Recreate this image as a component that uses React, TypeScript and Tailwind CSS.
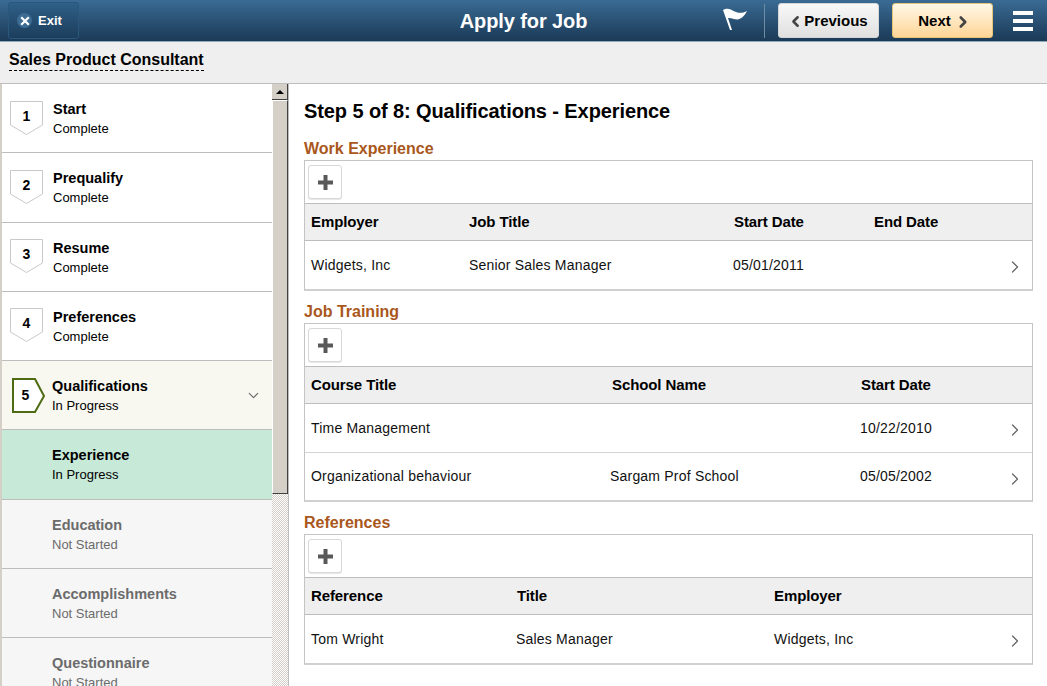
import { ChevronDown, ChevronRight, ChevronLeft } from 'lucide-react';

type Step = { num?: number; title: string; status: string; kind: 'done' | 'current' | 'active' | 'todo' };

const STEPS: Step[] = [
  { num: 1, title: 'Start', status: 'Complete', kind: 'done' },
  { num: 2, title: 'Prequalify', status: 'Complete', kind: 'done' },
  { num: 3, title: 'Resume', status: 'Complete', kind: 'done' },
  { num: 4, title: 'Preferences', status: 'Complete', kind: 'done' },
  { num: 5, title: 'Qualifications', status: 'In Progress', kind: 'current' },
  { title: 'Experience', status: 'In Progress', kind: 'active' },
  { title: 'Education', status: 'Not Started', kind: 'todo' },
  { title: 'Accomplishments', status: 'Not Started', kind: 'todo' },
  { title: 'Questionnaire', status: 'Not Started', kind: 'todo' },
];

function Badge({ num, current }: { num: number; current: boolean }) {
  if (current) {
    return (
      <div className="relative w-[33px] h-[35px] ml-[10px] shrink-0">
        <svg width="34" height="36" viewBox="0 0 34 36" className="absolute left-0 top-0">
          <path d="M1 1H23L32 18L23 34H1Z" fill="#fff" stroke="#4c6b12" strokeWidth="2" />
        </svg>
        <span className="absolute left-0 top-0 w-[27px] h-[35px] flex items-center justify-center text-[14px] font-bold text-black">{num}</span>
      </div>
    );
  }
  return (
    <div className="relative w-[33px] h-[35px] ml-[8px] shrink-0">
      <svg width="33" height="35" viewBox="0 0 33 35" className="absolute left-0 top-0">
        <path d="M0.5 0.5H32.5V24L16.5 33.5L0.5 24Z" fill="#fff" stroke="#c9c9c9" />
      </svg>
      <span className="absolute left-0 top-[-2px] w-[33px] h-[35px] flex items-center justify-center text-[14px] font-bold text-black">{num}</span>
    </div>
  );
}

function StepRow({ step }: { step: Step }) {
  const bg =
    step.kind === 'current' ? 'bg-[#f8f8f1]' : step.kind === 'active' ? 'bg-[#c7e9d8]' : step.kind === 'todo' ? 'bg-[#f6f6f6]' : 'bg-white';
  const titleColor = step.kind === 'todo' ? 'text-[#6b6b6b]' : 'text-black';
  const subColor = step.kind === 'todo' ? 'text-[#6b6b6b]' : 'text-black';
  return (
    <div className={`h-[69.25px] shrink-0 flex items-center border-b border-[#bdbdbd] ${bg}`}>
      {step.num ? <Badge num={step.num} current={step.kind === 'current'} /> : <div className="w-[43px] shrink-0" />}
      <div className={`flex-1 pt-[1px] ${step.num && step.num < 5 ? 'ml-[10px]' : 'ml-[7px]'}`}>
        <div className={`text-[14.5px] leading-[18px] font-bold ${titleColor}`}>{step.title}</div>
        <div className={`text-[13px] leading-[16px] mt-[3px] ${subColor}`}>{step.status}</div>
      </div>
      {step.kind === 'current' && <ChevronDown className="w-[17px] h-[17px] text-[#666] mr-[10px]" strokeWidth={1.5} />}
    </div>
  );
}

function AddBtn() {
  return (
    <div className="h-[43px] flex items-center pl-[3px] border-b border-[#bdbdbd]">
      <div className="w-[34px] h-[34px] rounded-[3px] border border-[#d8d8d8] bg-white flex items-center justify-center shadow-[0_1px_1px_rgba(0,0,0,0.1)]">
        <svg width="17" height="17" viewBox="0 0 17 17">
          <path d="M6.5 1h4v5.5H16v4h-5.5V16h-4v-5.5H1v-4h5.5Z" fill="#595959" />
        </svg>
      </div>
    </div>
  );
}

type Col = { label: string; w: string; cellOffset?: string };

function Section({ title, cols, rows, mt }: { title: string; cols: Col[]; rows: string[][]; mt: string }) {
  return (
    <section className={mt}>
      <h2 className="text-[16px] leading-[20px] font-bold text-[#a9571c]">{title}</h2>
      <div className="mt-[1px] border border-[#c4c4c4] border-b-[2px] border-b-[#d0d0d0]">
        <AddBtn />
        <div className="h-[37px] flex items-center pl-[6px] bg-[#efefef] border-b border-[#bdbdbd]">
          {cols.map((c) => (
            <div key={c.label} className={`${c.w} text-[15px] tracking-[-0.1px] font-bold text-black`}>{c.label}</div>
          ))}
        </div>
        {rows.map((r, i) => (
          <div key={i} className={`h-[48px] flex items-center pl-[6px] text-[14px] tracking-[0.2px] text-[#111] relative ${i > 0 ? 'border-t border-[#d4d4d4]' : ''}`}>
            {r.map((v, j) => (
              <div key={j} className={`${cols[j].w} ${cols[j].cellOffset ?? ''}`}>{v}</div>
            ))}
            <ChevronRight className="absolute right-[7px] top-[16px] w-[20px] h-[20px] text-[#666]" strokeWidth={1.5} />
          </div>
        ))}
      </div>
    </section>
  );
}

export default function App() {
  return (
    <div className="h-screen w-[1047px] overflow-hidden bg-white font-['Liberation_Sans',Arial,sans-serif] flex flex-col">
      <header className="h-[42px] shrink-0 flex items-center bg-gradient-to-b from-[#3a6b94] to-[#1b3a57] border-b border-[#8fa9bd] relative">
        <div className="ml-[8px] w-[71px] h-[37px] rounded-[3px] border border-[#2a577c] bg-gradient-to-b from-[#2f5f87] to-[#1c3e5c] flex items-center">
          <div className="ml-[8px] w-[15px] h-[15px] rounded-full bg-[#3d6c94] flex items-center justify-center">
            <svg width="10" height="10" viewBox="0 0 10 10"><path d="M1.2 1.2L8.8 8.8M8.8 1.2L1.2 8.8" stroke="#fff" strokeWidth="2.2" /></svg>
          </div>
          <span className="ml-[6px] text-[13px] font-bold text-white">Exit</span>
        </div>
        <div className="absolute left-0 right-0 top-[9px] text-center text-[20px] leading-[24px] tracking-[-0.1px] font-bold text-white pointer-events-none">Apply for Job</div>
        <div className="ml-auto flex items-center">
          <svg width="26" height="28" viewBox="0 0 26 28" className="mr-[16px]">
            <path d="M1 3C6 0 9 3 14 5C18 6.5 21 6 25 4C23 8 20 12 15 12.5C12 12.5 9 10.5 6 11L10 23L8 23L1 3Z" fill="#fff" />
          </svg>
          <div className="w-px h-[34px] bg-[#6f8ca5] mr-[13px]" />
          <button className="w-[101px] h-[35px] pt-[2px] pr-[2px] rounded-[3px] border border-[#d6d6d6] bg-gradient-to-b from-[#f8f8f8] to-[#e0e0e0] flex items-center justify-center text-[15px] font-bold text-black">
            <ChevronLeft className="w-[17px] h-[17px] text-[#444]" strokeWidth={3.5} />Previous
          </button>
          <button className="ml-[13px] w-[101px] h-[35px] pt-[2px] pl-[5px] rounded-[3px] border border-[#e8c479] bg-gradient-to-b from-[#fff7e6] to-[#ffd596] flex items-center justify-center text-[15px] font-bold text-black">
            Next<ChevronRight className="w-[18px] h-[18px] text-[#444] ml-[3px]" strokeWidth={3.5} />
          </button>
          <div className="ml-[20px] mr-[14px] w-[20px] flex flex-col gap-[4px]">
            <div className="h-[4px] bg-white" />
            <div className="h-[4px] bg-white" />
            <div className="h-[4px] bg-white" />
          </div>
        </div>
      </header>

      <div className="h-[42px] shrink-0 bg-[#efefef] border-b border-[#bdbdbd] pl-[9px] pt-[6px]">
        <span className="text-[16px] leading-[20px] font-bold text-black border-b border-dashed border-black inline-block">Sales Product Consultant</span>
      </div>

      <div className="flex-1 flex min-h-0">
        <div className="w-[2px] shrink-0 bg-[#d4d0c8]" />
        <nav className="w-[270px] shrink-0 flex flex-col overflow-hidden">
          {STEPS.map((s) => <StepRow key={s.title} step={s} />)}
        </nav>
        <div className="w-[16px] shrink-0 flex flex-col bg-[repeating-conic-gradient(#d4d0c8_0%_25%,#ffffff_0%_50%)] bg-[length:2px_2px]">
          <div className="h-[16px] bg-[#d4d0c8] border-r border-b border-[#404040] flex items-center justify-center">
            <div className="w-0 h-0 border-x-[4px] border-x-transparent border-b-[4px] border-b-black" />
          </div>
          <div className="h-[394px] bg-[#d4d0c8] border-t border-l border-white border-r border-b border-r-[#404040] border-b-[#404040]" />
        </div>
        <div className="w-px shrink-0 bg-[#bdbdbd]" />
        <main className="flex-1 pl-[15px] pr-[14px] pt-[16px]">
          <h1 className="text-[20px] leading-[23px] tracking-[-0.1px] font-bold text-black">Step 5 of 8: Qualifications - Experience</h1>
          <Section
            mt="mt-[16px]"
            title="Work Experience"
            cols={[
              { label: 'Employer', w: 'w-[158px]' },
              { label: 'Job Title', w: 'w-[265px]' },
              { label: 'Start Date', w: 'w-[140px]', cellOffset: '-ml-[1px]' },
              { label: 'End Date', w: 'w-[100px]' },
            ]}
            rows={[['Widgets, Inc', 'Senior Sales Manager', '05/01/2011', '']]}
          />
          <Section
            mt="mt-[11px]"
            title="Job Training"
            cols={[
              { label: 'Course Title', w: 'w-[301px]' },
              { label: 'School Name', w: 'w-[249px]', cellOffset: '-ml-[2px]' },
              { label: 'Start Date', w: 'w-[120px]', cellOffset: 'ml-[1px]' },
            ]}
            rows={[
              ['Time Management', '', '10/22/2010'],
              ['Organizational behaviour', 'Sargam Prof School', '05/05/2002'],
            ]}
          />
          <Section
            mt="mt-[11px]"
            title="References"
            cols={[
              { label: 'Reference', w: 'w-[206px]' },
              { label: 'Title', w: 'w-[257px]', cellOffset: '-ml-[1px]' },
              { label: 'Employer', w: 'w-[200px]', cellOffset: 'ml-[1px]' },
            ]}
            rows={[['Tom Wright', 'Sales Manager', 'Widgets, Inc']]}
          />
        </main>
      </div>
    </div>
  );
}
